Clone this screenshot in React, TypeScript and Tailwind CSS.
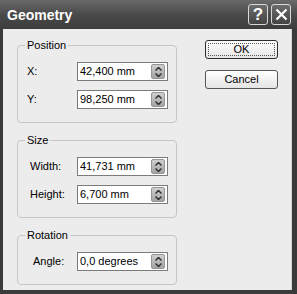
import React from 'react'

const font = { fontFamily: '"Liberation Sans", Arial, sans-serif' }

function Spinner() {
  return (
    <div className="w-[14px] h-[15px] rounded-[2px] border border-[#959595] bg-gradient-to-b from-[#cfcfcf] to-[#a4a4a4] flex flex-col items-center justify-center gap-[2px]">
      <svg width="7" height="4" viewBox="0 0 7 4">
        <path d="M0.5 3.5 L3.5 0.5 L6.5 3.5" fill="none" stroke="#333" strokeWidth="1.5" />
      </svg>
      <svg width="7" height="4" viewBox="0 0 7 4">
        <path d="M0.5 0.5 L3.5 3.5 L6.5 0.5" fill="none" stroke="#333" strokeWidth="1.5" />
      </svg>
    </div>
  )
}

function Field({ label, value, pad }: { label: string; value: string; pad: string }) {
  return (
    <div className="flex items-center h-[19px]">
      <span className={`${pad} w-[59px] leading-[13px]`}>{label}</span>
      <div className="w-[91px] h-[19px] border border-[#7b7b7b] bg-white flex items-center justify-between pl-[2px] pr-[2px]">
        <span className="leading-[13px]">{value}</span>
        <Spinner />
      </div>
    </div>
  )
}

function Group({ title, children }: { title: string; children: React.ReactNode }) {
  return (
    <div className="relative border border-[#c6c6c6] rounded-[4px] pt-[16px] pb-[13px] flex flex-col gap-[9px]">
      <span className="absolute -top-[7px] left-[7px] px-[2px] bg-[#ececec] leading-[13px]">{title}</span>
      {children}
    </div>
  )
}

export default function App() {
  return (
    <div className="w-[297px] h-[294px] bg-[#3b3b3b] flex flex-col text-[11px] text-black" style={font}>
      {/* Title bar */}
      <div className="h-[29px] bg-gradient-to-b from-[#6a6a6a] via-[#4a4a4a] to-[#3d3d3d] flex items-center justify-between pl-[7px] pr-[6px]">
        <span className="text-white font-bold text-[14px] leading-none">Geometry</span>
        <div className="flex gap-[3px]">
          <div className="w-[20px] h-[21px] rounded-[3px] border border-[#d8d8d8] bg-gradient-to-b from-[#6c6c6c] to-[#444] flex items-center justify-center text-white font-bold text-[17px] leading-none">
            ?
          </div>
          <div className="w-[20px] h-[21px] rounded-[3px] border border-[#d8d8d8] bg-gradient-to-b from-[#6c6c6c] to-[#444] flex items-center justify-center">
            <svg width="13" height="13" viewBox="0 0 13 13">
              <path d="M1.5 1.5 L11.5 11.5 M11.5 1.5 L1.5 11.5" stroke="white" strokeWidth="2.2" />
            </svg>
          </div>
        </div>
      </div>

      {/* Body */}
      <div className="flex-1 ml-[3px] mr-[5px] mb-[4px] bg-[#ececec] border-r border-[#d4d4d4] flex pl-[14px] pt-[16px]">
        <div className="w-[160px] flex flex-col gap-[17px]">
          <Group title="Position">
            <Field label="X:" value="42,400 mm" pad="pl-[9px]" />
            <Field label="Y:" value="98,250 mm" pad="pl-[9px]" />
          </Group>
          <Group title="Size">
            <Field label="Width:" value="41,731 mm" pad="pl-[12px]" />
            <Field label="Height:" value="6,700 mm" pad="pl-[12px]" />
          </Group>
          <Group title="Rotation">
            <Field label="Angle:" value="0,0 degrees" pad="pl-[15px]" />
          </Group>
        </div>

        <div className="ml-[28px] mt-[-5px] flex flex-col gap-[11px]">
          <button className="w-[73px] h-[19px] rounded-[3px] border border-[#2e2e2e] bg-gradient-to-b from-white to-[#e4e4e4] p-[2px]">
            <div className="w-full h-full border border-dotted border-[#555] flex items-center justify-center leading-none">
              OK
            </div>
          </button>
          <button className="w-[73px] h-[19px] rounded-[3px] border border-[#555] bg-gradient-to-b from-white to-[#e4e4e4] flex items-center justify-center leading-none">
            Cancel
          </button>
        </div>
      </div>
    </div>
  )
}
